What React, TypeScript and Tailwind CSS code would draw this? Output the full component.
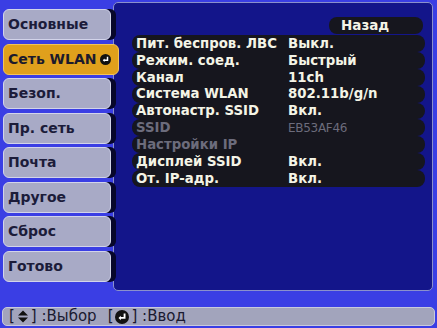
import React from 'react';

const tabs = ['Основные', 'Сеть WLAN', 'Безоп.', 'Пр. сеть', 'Почта', 'Другое', 'Сброс', 'Готово'];

const rows: { label: string; value: string; disabled?: boolean }[] = [
  { label: 'Пит. беспров. ЛВС', value: 'Выкл.' },
  { label: 'Режим. соед.', value: 'Быстрый' },
  { label: 'Канал', value: '11ch' },
  { label: 'Система WLAN', value: '802.11b/g/n' },
  { label: 'Автонастр. SSID', value: 'Вкл.' },
  { label: 'SSID', value: 'EB53AF46', disabled: true },
  { label: 'Настройки IP', value: '', disabled: true },
  { label: 'Дисплей SSID', value: 'Вкл.' },
  { label: 'От. IP-адр.', value: 'Вкл.' },
];

function EnterIcon({ size = 11 }: { size?: number }) {
  return (
    <svg width={size} height={size} viewBox="0 0 12 12">
      <circle cx="6" cy="6" r="6" fill="#111" />
      <path d="M8.2 3 V6.8 H4.2" stroke="#fff" strokeWidth="1.6" fill="none" />
      <path d="M5 4.9 L3 6.8 L5 8.7 Z" fill="#fff" />
    </svg>
  );
}

function UpDownIcon() {
  return (
    <svg width="10" height="13" viewBox="0 0 10 12">
      <path d="M5 0 L10 5 H0 Z" fill="#111" />
      <path d="M5 12 L10 7 H0 Z" fill="#111" />
    </svg>
  );
}

export default function App() {
  return (
    <div
      className="w-[437px] h-[328px] bg-[#3a3ee4] overflow-hidden flex flex-col"
      style={{ fontFamily: '"DejaVu Sans", "Noto Sans", sans-serif' }}
    >
      <div className="flex h-[289px] mt-[2px]">
        {/* Tabs */}
        <div className="flex flex-col gap-[3.5px] pt-[7px] pl-[3px] w-[110px] relative z-10">
          {tabs.map((t, i) =>
            i === 1 ? (
              <div
                key={t}
                className="h-[31px] w-[116px] rounded-[6px] bg-[#e0a01c] border border-[#f2c458] flex items-center justify-between pl-[4px] pr-[7px] text-[14px] font-bold text-[#1c1a2c] whitespace-nowrap"
              >
                <span>{t}</span>
                <EnterIcon />
              </div>
            ) : (
              <div
                key={t}
                className="h-[31px] w-[108px] rounded-[6px] bg-[#a8aac6] border border-[#d2d4ea] flex items-center pl-[4px] text-[14px] font-bold text-[#1c1c3a] shadow-[5px_0_0_#07072a] whitespace-nowrap"
              >
                {t}
              </div>
            )
          )}
        </div>

        {/* Main panel */}
        <div className="ml-[3px] w-[320px] h-[289px] rounded-[5px] bg-[#13158a] border-[1.5px] border-[#8a90cc] pt-[14px] pl-[18px] pr-[7px]">
          <div className="flex justify-end pr-[2px]">
            <div className="w-[94px] h-[17px] rounded-[8px] bg-[#16161e] flex items-center pl-[12px] text-[13.5px] font-bold text-[#f4f4e6] leading-none">
              Назад
            </div>
          </div>
          <div className="flex flex-col mt-[1px]">
            {rows.map((r) => (
              <div
                key={r.label}
                className={`h-[16.9px] rounded-[8px] bg-[#16161e] flex items-center pl-[4px] text-[13.3px] font-bold leading-none whitespace-nowrap ${
                  r.disabled ? 'text-[#6c6c7c]' : 'text-[#f4f4e6]'
                }`}
              >
                <span className="w-[152px]">{r.label}</span>
                <span className={r.disabled ? 'font-normal text-[12px] tracking-[-0.3px]' : ''}>{r.value}</span>
              </div>
            ))}
          </div>
        </div>
      </div>

      {/* Footer */}
      <div className="mt-[16px] mx-[2px] h-[19px] rounded-[5px] bg-[#a2a4bc] border border-[#c8cadc] flex items-center pl-[6px] text-[15px] leading-none text-[#1a1a30] gap-[11px] whitespace-nowrap">
        <span className="flex items-center">
          [<span className="mx-[3px] flex"><UpDownIcon /></span>] :Выбор
        </span>
        <span className="flex items-center">
          [<span className="mx-[2px] flex"><EnterIcon size={14} /></span>] :Ввод
        </span>
      </div>
    </div>
  );
}
